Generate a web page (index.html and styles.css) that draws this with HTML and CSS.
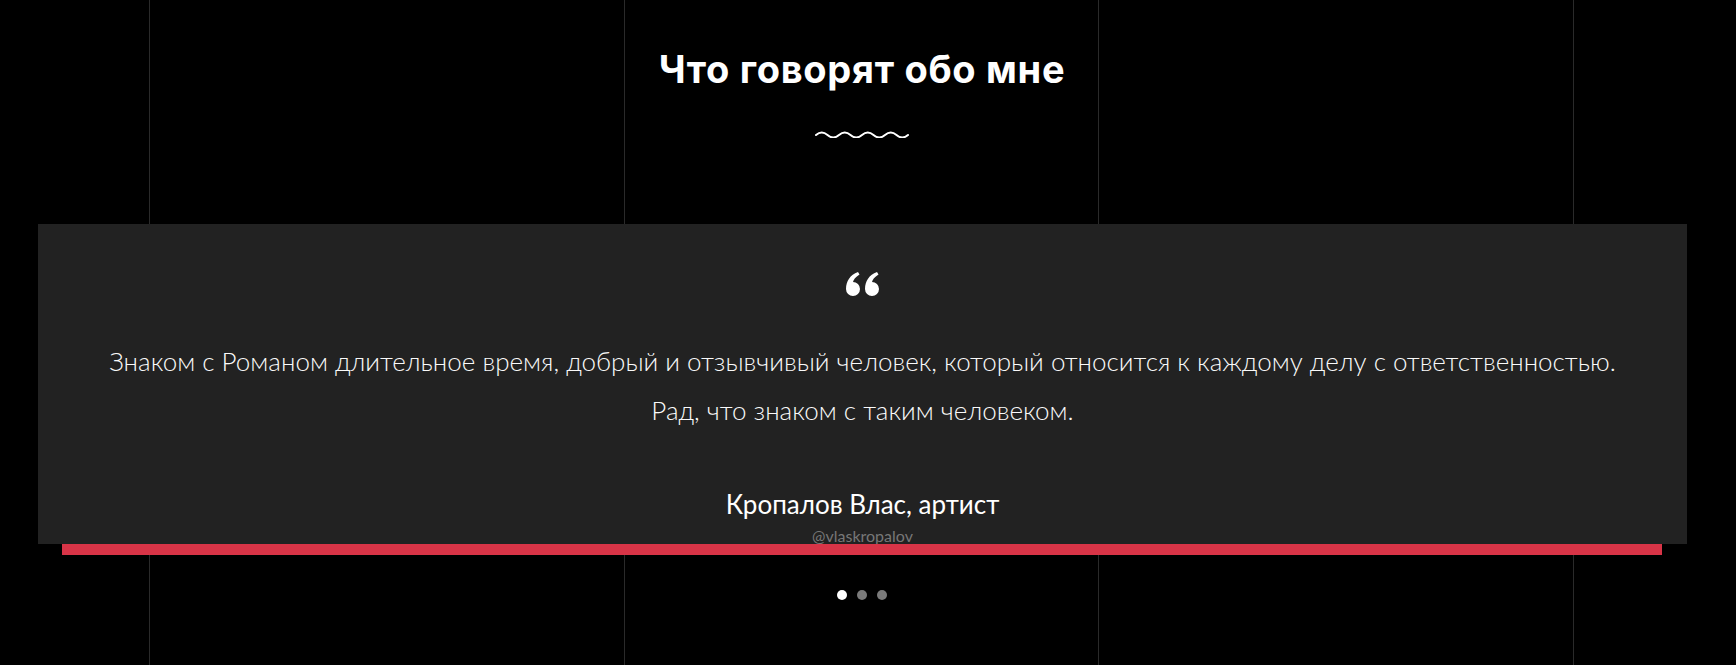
FILE: index.html
```html
<!DOCTYPE html>
<html lang="ru">
<head>
<meta charset="utf-8">
<title>Отзывы</title>
<link rel="stylesheet" href="styles.css">
</head>
<body>
<div class="page">
  <section class="testimonials">
    <h2 class="title">Что говорят обо мне</h2>
    <svg class="wave" width="94" height="8" viewBox="0 0 94 8" aria-hidden="true">
      <path d="M1 5 q5.75 -5 11.5 0 t11.5 0 t11.5 0 t11.5 0 t11.5 0 t11.5 0 t11.5 0 t11.5 0" fill="none" stroke="#fff" stroke-width="2" stroke-linecap="round"/>
    </svg>
    <div class="card">
      <svg class="quote" width="33" height="24" viewBox="0 0 33 24" aria-hidden="true">
        <path d="M7 10 A7 7 0 1 1 0 17 C0 9 4 3 12 0 L13.5 2.5 C9.5 5 7.5 7.5 7 10 Z" fill="#fff"/>
        <path d="M26 10 A7 7 0 1 1 19 17 C19 9 23 3 31 0 L32.5 2.5 C28.5 5 26.5 7.5 26 10 Z" fill="#fff"/>
      </svg>
      <p class="text">Знаком с Романом длительное время, добрый и отзывчивый человек, который относится к каждому делу с ответственностью.<br>Рад, что знаком с таким человеком.</p>
      <div class="name">Кропалов Влас, артист</div>
      <div class="handle">@vlaskropalov</div>
    </div>
    <div class="accent"></div>
    <div class="dots">
      <span class="dot active"></span>
      <span class="dot"></span>
      <span class="dot"></span>
    </div>
  </section>
</div>
</body>
</html>
```

FILE: styles.css
```css
* { box-sizing: border-box; }
html, body { margin: 0; padding: 0; background: #000; }
body { font-family: "Lato", "Liberation Sans", sans-serif; color: #fff; }

.page {
  width: 1724px;
  height: 665px;
  overflow: hidden;
  background:
    linear-gradient(#2a2a2a, #2a2a2a) 149px 0 / 1px 100% no-repeat,
    linear-gradient(#2a2a2a, #2a2a2a) 624px 0 / 1px 100% no-repeat,
    linear-gradient(#2a2a2a, #2a2a2a) 1098px 0 / 1px 100% no-repeat,
    linear-gradient(#2a2a2a, #2a2a2a) 1573px 0 / 1px 100% no-repeat,
    #000;
}

.testimonials {
  padding-top: 46px;
  display: flex;
  flex-direction: column;
  align-items: center;
}

.title {
  margin: 0;
  font-family: "Inter", "Liberation Sans", sans-serif;
  font-weight: 700;
  font-size: 38px;
  line-height: 46px;
  letter-spacing: 0.7px;
}

.wave { display: block; margin-top: 38px; }

.card {
  align-self: stretch;
  margin: 86px 37px 0 38px;
  background: #222;
  padding: 48px 0 0;
  display: flex;
  flex-direction: column;
  align-items: center;
  text-align: center;
}

.quote { display: block; }

.text {
  margin: 41px 0 0;
  font-size: 26px;
  line-height: 49px;
  font-weight: 300;
  color: #fafafa;
}

.name {
  margin-top: 54px;
  font-size: 26px;
  line-height: 30px;
  font-weight: 400;
}

.handle {
  margin-top: 9px;
  font-size: 16px;
  line-height: 16px;
  font-weight: 400;
  color: #777;
}

.accent {
  width: 1600px;
  height: 11px;
  background: #d83447;
}

.dots {
  margin-top: 35px;
  display: flex;
  gap: 10px;
}

.dot {
  width: 10px;
  height: 10px;
  border-radius: 50%;
  background: #7a7a7a;
}

.dot.active { background: #fff; }
```
